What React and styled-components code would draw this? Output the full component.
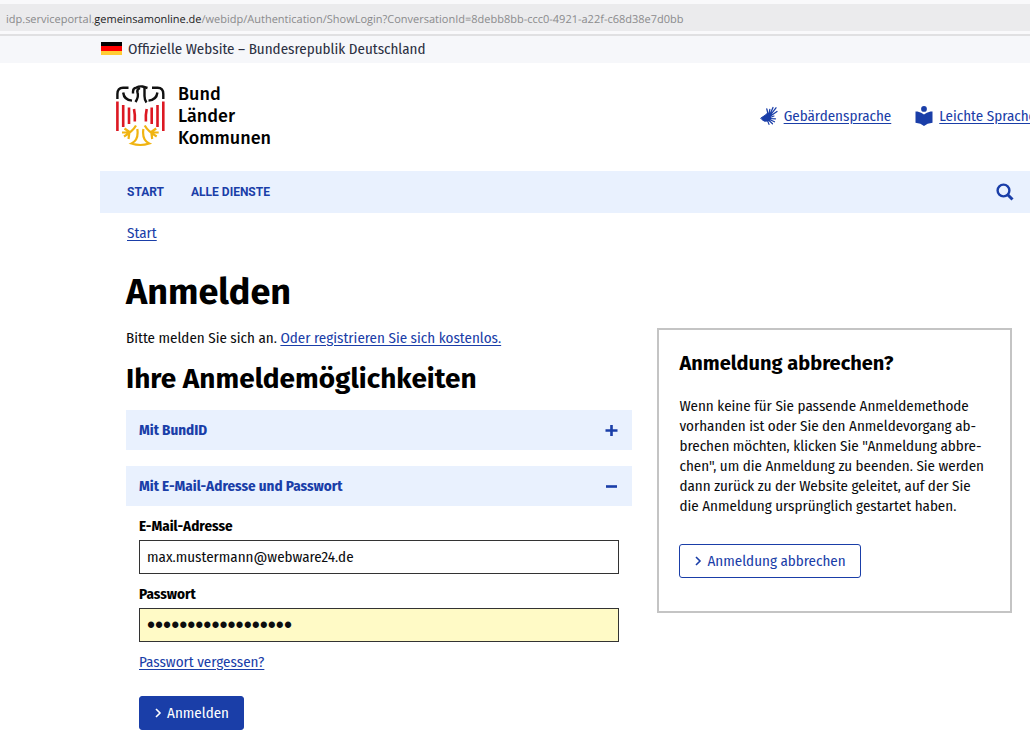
import React, { useState } from "react";
import styled, { createGlobalStyle } from "styled-components";

const BLUE = "#1a3ea8";
const PALE = "#e9f1fe";

const Global = createGlobalStyle`
  *, *::before, *::after { box-sizing: border-box; }
  body {
    margin: 0;
    background: #fff;
    color: #0b0c0e;
    font-family: "Fira Sans Condensed", "Noto Sans", sans-serif;
    font-size: 15px;
    line-height: 20px;
    overflow-x: hidden;
  }
  h1, h2, h3 { font-family: "Fira Sans", "Noto Sans", sans-serif; }
  a { color: ${BLUE}; text-underline-offset: 2px; }
  button, input { font: inherit; }
`;

const AddressBar = styled.div`
  padding: 7px 6px;
  height: 36px;
  border-top: 4px solid #f9f9fb;
  border-bottom: 2px solid #e0e0e2;
  background: linear-gradient(#ebebed 27px, #f9f9fb 27px);
  color: #8a8a8c;
  font-family: "Segoe UI", "Open Sans", sans-serif;
  font-size: 11px;
  line-height: 18px;
  white-space: nowrap;
  text-rendering: geometricPrecision;
`;

const Host = styled.span`
  color: #1c1c1e;
`;

const OfficialBar = styled.div`
  display: flex;
  align-items: center;
  gap: 6px;
  height: 27px;
  padding: 0 0 2px 101px;
  background: #f6f7fa;
  color: #2c3042;
`;

const Flag = styled.span`
  width: 21px;
  height: 13px;
  background: linear-gradient(#000 4px, #f00 4px 9px, #fc3 9px);
`;

const Shell = styled.div`
  margin-left: 100px;
`;

const Header = styled.header`
  display: flex;
  justify-content: space-between;
  height: 108px;
  padding: 20px 0 0 15px;
`;

const Logo = styled.div`
  display: flex;
  gap: 12px;
  color: #000;
  font-family: "Fira Sans", "Noto Sans", sans-serif;
  font-size: 18px;
  font-weight: 500;
  line-height: 22px;
`;

const Utility = styled.nav`
  display: flex;
  gap: 24px;
  height: 65px;
  align-items: center;
  margin-right: -6px;
`;

const UtilityItem = styled.span`
  display: flex;
  align-items: center;
  gap: 6px;
  color: ${BLUE};
  white-space: nowrap;
`;

const NavBar = styled.nav`
  display: flex;
  align-items: center;
  gap: 27px;
  height: 42px;
  padding: 0 16px 0 27px;
  background: ${PALE};
  font-family: Roboto, Arial, sans-serif;
  font-size: 12px;
  font-weight: 700;
  line-height: 22px;
  a { text-decoration: none; }
`;

const SearchButton = styled.button`
  display: flex;
  margin-left: auto;
  padding: 0;
  border: 0;
  background: none;
  color: ${BLUE};
`;

const Crumbs = styled.nav`
  padding: 10px 27px;
`;

const Columns = styled.main`
  display: grid;
  grid-template-columns: minmax(0, 10fr) minmax(0, 7fr);
  gap: 25px;
  padding: 19px 18px 0 26px;
`;

const Title = styled.h1`
  margin: 0 0 16px;
  color: #000;
  font-size: 36px;
  line-height: 40px;
`;

const Intro = styled.p`
  margin: 0;
`;

const Subtitle = styled.h2`
  margin: 13px 0;
  color: #000;
  font-size: 28px;
  line-height: 36px;
`;

const AccordionHead = styled.button`
  display: flex;
  align-items: center;
  justify-content: space-between;
  width: 100%;
  height: 40px;
  margin-top: ${(p) => (p.$spaced ? 16 : 0)}px;
  padding: 0 14px 0 13px;
  border: 0;
  background: ${PALE};
  color: ${BLUE};
  font-weight: 700;
`;

const Form = styled.form`
  padding: 10px 13px 0;
`;

const Field = styled.div`
  margin-bottom: 10px;
`;

const Label = styled.label`
  display: block;
  margin-bottom: 4px;
  color: #000;
  font-weight: 700;
`;

const Input = styled.input`
  display: block;
  width: 100%;
  height: 34px;
  padding: 0 7px;
  border: 1px solid #333;
  border-radius: 0;
  background: ${(p) => (p.$filled ? "#fffac6" : "#fff")};
  color: #0b0c0e;
  font-family: ${(p) => (p.$filled ? '"Liberation Sans", sans-serif' : "inherit")};
  font-size: ${(p) => (p.$filled ? 23 : 15)}px;
`;

const Action = styled.button`
  display: inline-flex;
  align-items: center;
  gap: 5px;
  height: 34px;
  padding: 0 14px;
  border: 1px solid ${BLUE};
  border-radius: 3px;
  background: ${(p) => (p.$primary ? BLUE : "#fff")};
  color: ${(p) => (p.$primary ? "#fff" : BLUE)};
  white-space: nowrap;
`;

const Submit = styled.div`
  margin-top: 24px;
`;

const Aside = styled.aside`
  align-self: start;
  margin-top: 56px;
  padding: 21px 20px 33px;
  border: 2px solid #c4c4c4;
  h3 {
    margin: 0 0 21px;
    color: #000;
    font-size: 20px;
    line-height: 24px;
  }
  p { margin: 0 0 28px; }
`;

function Eagle() {
  return (
    <svg width="51" height="64" viewBox="0 0 51 64" fill="none" aria-hidden="true">
      <g stroke="#111" strokeWidth="2.4">
        <path d="M2.4 16V11Q2.4 4.8 8 4.8H13.5" />
        <path d="M8.2 9.5Q9 17 17 17.6" />
        <path d="M48.3 16V11Q48.3 4.8 42.7 4.8H37" />
        <path d="M42.4 9.5Q41.5 17 33.5 17.6" />
        <path d="M18 10.5V8.5Q18 5 21.5 4.6Q24 3 27.5 3.5L32.5 5" />
        <path d="M25 5Q21.5 6.5 22.5 9.5Q24 13.5 20.5 19" />
        <path d="M29.5 4.5V13Q29.5 17 31.5 19.5" />
      </g>
      <g stroke="#dc1822" strokeWidth="2.6">
        <path d="M2.4 18.5V48M8.2 22V44M14 24.5V41M19 26Q20.3 32 19.8 38.5" />
        <path d="M48.3 18.5V48M42.5 22V44M36.7 24.5V41M31.7 26Q30.4 32 30.9 38.5" />
      </g>
      <g stroke="#f0b411" strokeWidth="2.2">
        <path d="M21 42.5Q18 48 9 53.5M7 49.5L15 49.5M14.5 48.5L13.5 56M9.5 45.5L14.5 49" />
        <path d="M29.7 42.5Q32.7 48 41.7 53.5M43.7 49.5L35.7 49.5M36.2 48.5L37.2 56M41.2 45.5L36.2 49" />
        <path d="M22.3 46Q24 57 16.5 60.5Q25.3 63.5 34.2 60.5Q26.7 57 28.4 46" />
      </g>
    </svg>
  );
}

function SignLanguageIcon() {
  return (
    <svg width="18" height="20" viewBox="0 0 18 20" fill="none" stroke="currentColor" strokeLinecap="round" aria-hidden="true">
      <path d="M1 12L5.5 9L7.5 7L10 9L10.5 13L7.5 15L4.5 15.2L2.5 14Z" fill="currentColor" strokeWidth="1" />
      <path d="M8.2 8.5L6.8 3M9 8.5L9.8 3.5M9.8 8.8L13 1.5M10.3 9.2L16 1.8M10.5 10L17 5.5" strokeWidth="1.3" />
      <path d="M10 11.5L14 10M9.5 12.5L15.5 12.8M9.5 13.5L14.5 15.8M8.5 14L12.5 17.8M7.5 14.5L9 18.4" strokeWidth="1.2" />
    </svg>
  );
}

function ReaderIcon() {
  return (
    <svg width="18" height="20" viewBox="0 0 18 20" fill="currentColor" aria-hidden="true">
      <circle cx="9" cy="2.9" r="2.9" />
      <path d="M.5 5.6H2.5Q6.5 6.4 9 8.6Q11.5 6.4 15.5 5.6H17.5V16.8Q12 17.2 9 20Q6 17.2.5 16.8Z" />
    </svg>
  );
}

function Chevron() {
  return (
    <svg width="8" height="10" viewBox="0 0 8 10" fill="none" stroke="currentColor" strokeWidth="1.6" aria-hidden="true">
      <path d="M2 1L6 5L2 9" />
    </svg>
  );
}

function Toggle({ open }) {
  return (
    <svg width="13" height="13" viewBox="0 0 13 13" stroke="currentColor" strokeWidth="2.6" aria-hidden="true">
      <path d={open ? "M1 6.5H12" : "M.5 6.5H12.5M6.5 1V12"} />
    </svg>
  );
}

export default function App() {
  const [email, setEmail] = useState("max.mustermann@webware24.de");
  const [password, setPassword] = useState("mustermannpasswort");
  return (
    <>
      <Global />
      <AddressBar>
        idp.serviceportal.<Host>gemeinsamonline.de</Host>
        /webidp/Authentication/ShowLogin?ConversationId=8debb8bb-ccc0-4921-a22f-c68d38e7d0bb
      </AddressBar>
      <OfficialBar>
        <Flag />
        Offizielle Website – Bundesrepublik Deutschland
      </OfficialBar>
      <Shell>
        <Header>
          <Logo>
            <Eagle />
            <div>
              <div>Bund</div>
              <div>Länder</div>
              <div>Kommunen</div>
            </div>
          </Logo>
          <Utility>
            <UtilityItem>
              <SignLanguageIcon />
              <a href="#gebaerden">Gebärdensprache</a>
            </UtilityItem>
            <UtilityItem>
              <ReaderIcon />
              <a href="#leicht">Leichte Sprache</a>
            </UtilityItem>
          </Utility>
        </Header>
        <NavBar>
          <a href="#start">START</a>
          <a href="#dienste">ALLE DIENSTE</a>
          <SearchButton aria-label="Suche">
            <svg width="18" height="18" viewBox="0 0 18 18" fill="none" stroke="currentColor">
              <circle cx="7.5" cy="7.5" r="5.9" strokeWidth="2.4" />
              <path d="M11.5 11.5L16.5 16.5" strokeWidth="3" />
            </svg>
          </SearchButton>
        </NavBar>
        <Crumbs>
          <a href="#start">Start</a>
        </Crumbs>
        <Columns>
          <section>
            <Title>Anmelden</Title>
            <Intro>
              Bitte melden Sie sich an. <a href="#register">Oder registrieren Sie sich kostenlos.</a>
            </Intro>
            <Subtitle>Ihre Anmeldemöglichkeiten</Subtitle>
            <AccordionHead aria-expanded="false">
              Mit BundID
              <Toggle />
            </AccordionHead>
            <AccordionHead $spaced aria-expanded="true">
              Mit E-Mail-Adresse und Passwort
              <Toggle open />
            </AccordionHead>
            <Form onSubmit={(e) => e.preventDefault()}>
              <Field>
                <Label htmlFor="email">E-Mail-Adresse</Label>
                <Input id="email" value={email} onChange={(e) => setEmail(e.target.value)} />
              </Field>
              <Field>
                <Label htmlFor="password">Passwort</Label>
                <Input
                  id="password"
                  type="password"
                  $filled
                  value={password}
                  onChange={(e) => setPassword(e.target.value)}
                />
              </Field>
              <a href="#forgot">Passwort vergessen?</a>
              <Submit>
                <Action $primary>
                  <Chevron />
                  Anmelden
                </Action>
              </Submit>
            </Form>
          </section>
          <Aside>
            <h3>Anmeldung abbrechen?</h3>
            <p>
              Wenn keine für Sie passende Anmeldemethode
              <br />
              vorhanden ist oder Sie den Anmeldevorgang ab-
              <br />
              brechen möchten, klicken Sie "Anmeldung abbre-
              <br />
              chen", um die Anmeldung zu beenden. Sie werden
              <br />
              dann zurück zu der Website geleitet, auf der Sie
              <br />
              die Anmeldung ursprünglich gestartet haben.
            </p>
            <Action type="button">
              <Chevron />
              Anmeldung abbrechen
            </Action>
          </Aside>
        </Columns>
      </Shell>
    </>
  );
}
